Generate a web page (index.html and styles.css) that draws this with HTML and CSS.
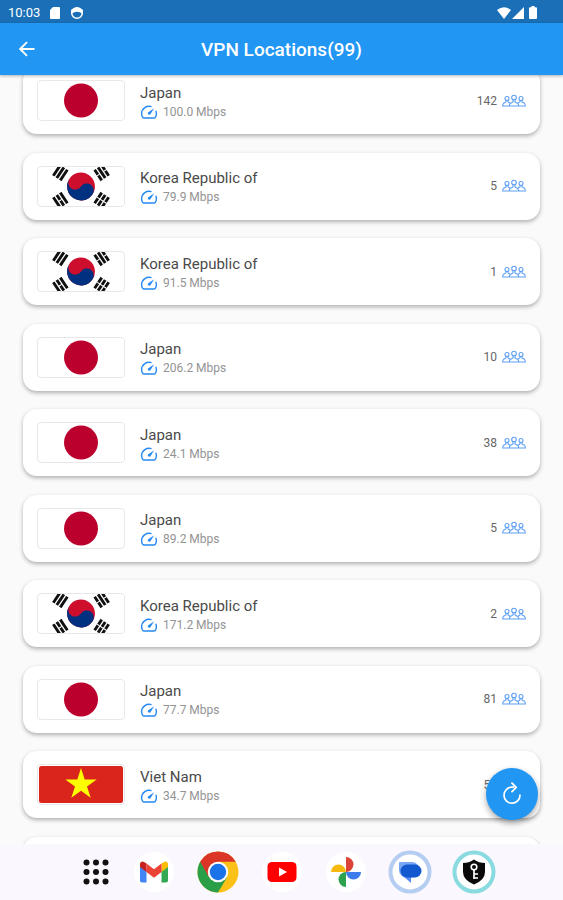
FILE: index.html
```html
<!DOCTYPE html>
<html lang="en">
<head>
    <meta charset="UTF-8">
    <meta name="viewport" content="width=device-width, initial-scale=1.0">
    <title>VPN Locations</title>
    <link rel="stylesheet" href="styles.css">
</head>
<body>
    <!-- shared drawings -->
    <svg class="sprite" aria-hidden="true">
        <symbol id="flag-jp" viewBox="0 0 86 39">
            <circle cx="43" cy="19.5" r="17" fill="#bc002d"/>
        </symbol>
        <symbol id="flag-kr" viewBox="-37 -16.8 74 33.6">
            <g transform="rotate(-56.31)">
                <path d="M-5.500-25H5.500M-5.500-21.400H5.500M-5.500-17.800H5.500M-5.500 17.800H5.500M-5.500 21.400H5.500M-5.500 25H5.500" stroke="#111" stroke-width="2.500"/>
                <path d="M0 16.500v10" stroke="#fff"/>
                <circle r="12" fill="#cd0f2d"/>
                <path d="M0-12A6 6 0 0 0 0 0A6 6 0 0 1 0 12A12 12 0 0 1 0-12Z" fill="#003080"/>
            </g>
            <g transform="rotate(-123.69)">
                <path d="M-5.500-25H5.500M-5.500-21.400H5.500M-5.500-17.800H5.500M-5.500 17.800H5.500M-5.500 21.400H5.500M-5.500 25H5.500" stroke="#111" stroke-width="2.500"/>
                <path d="M0-22.800v2.800M0 16.500v2.700M0 23.500v3" stroke="#fff"/>
            </g>
        </symbol>
        <symbol id="flag-vn" viewBox="0 0 86 39">
            <rect x="1" y="1" width="84" height="37" rx="2.500" fill="#da251d"/>
            <path d="M43 3l3.700 11.400h12l-9.700 7 3.700 11.400-9.700-7-9.700 7 3.700-11.400-9.700-7h12z" fill="#ff0"/>
        </symbol>
        <symbol id="speed" viewBox="0 0 18 16">
            <path d="M11.500 2.700A7.500 7.500 0 0 0 1.600 9.500Q1.600 11.800 2.700 13.300Q3.200 14 4 14H14Q14.800 14 15.300 13.300Q16.400 11.800 16.400 9.500Q16.400 8 15.800 6.700" fill="none" stroke="#2589f2" stroke-width="1.400" stroke-linejoin="round"/>
            <path d="M14.200 4.300L10.200 10.400A1.500 1.500 0 0 1 8 8.400Z" fill="#2589f2"/>
        </symbol>
        <symbol id="people" viewBox="0 0 24 14">
            <g fill="none" stroke="#5f9ff5" stroke-width="1.100">
                <circle cx="5" cy="4.500" r="2"/>
                <circle cx="12" cy="3.500" r="2.300"/>
                <circle cx="19" cy="4.500" r="2"/>
                <path d="M4 6.500V8L1.500 9.300Q.7 10 .7 12H23.300Q23.300 10 22.500 9.300L20 8V6.500M6 6.500V8L8 9M11 6v2L8.300 9.500Q7.300 10.300 7.300 12M16.700 12Q16.700 10.300 15.700 9.500L13 8V6M18 6.500V8L16 9"/>
            </g>
        </symbol>
    </svg>

    <div class="app">
        <div class="status-bar">
            <span>10:03</span>
            <svg width="12" height="14" viewBox="0 0 12 14"><path d="M4 1h6a1 1 0 0 1 1 1v10a1 1 0 0 1-1 1H2a1 1 0 0 1-1-1V4z" fill="#fff"/></svg>
            <svg width="14" height="14" viewBox="0 0 14 14">
                <circle cx="7" cy="7" r="5.300" fill="none" stroke="#fff" stroke-width="1.500"/>
                <path d="M.8 4Q7-1 13.200 4L12 7.500Q10 5.800 7 5.800T2 7.500z" fill="#fff"/>
            </svg>
            <div class="signals">
                <svg width="14" height="12" viewBox="0 0 14 12"><path d="M0 3Q7-2.500 14 3L7 12z" fill="#fff"/></svg>
                <svg width="12" height="12" viewBox="0 0 12 12"><path d="M12 0v12H0z" fill="#fff"/></svg>
                <svg class="battery" width="8" height="13" viewBox="0 0 8 13"><path d="M2.500 0h3v1.300H7a1 1 0 0 1 1 1V12a1 1 0 0 1-1 1H1a1 1 0 0 1-1-1V2.300a1 1 0 0 1 1-1h1.500z" fill="#fff"/></svg>
            </div>
        </div>

        <header class="app-bar">
            <button class="back-btn" type="button" aria-label="Back">
                <svg width="16" height="16" viewBox="0 0 16 16"><path d="M15.500 8H1.500M8 1.200L1.200 8 8 14.800" fill="none" stroke="#fff" stroke-width="1.900"/></svg>
            </button>
            <h1>VPN Locations(99)</h1>
        </header>

        <main class="locations">
            <ul class="list">
                <li class="card">
                    <svg class="flag"><use href="#flag-jp"/></svg>
                    <div class="info">
                        <h2>Japan</h2>
                        <p><svg class="speed"><use href="#speed"/></svg>100.0 Mbps</p>
                    </div>
                    <span class="users">142<svg class="people"><use href="#people"/></svg></span>
                </li>
                <li class="card">
                    <svg class="flag"><use href="#flag-kr"/></svg>
                    <div class="info">
                        <h2>Korea Republic of</h2>
                        <p><svg class="speed"><use href="#speed"/></svg>79.9 Mbps</p>
                    </div>
                    <span class="users">5<svg class="people"><use href="#people"/></svg></span>
                </li>
                <li class="card">
                    <svg class="flag"><use href="#flag-kr"/></svg>
                    <div class="info">
                        <h2>Korea Republic of</h2>
                        <p><svg class="speed"><use href="#speed"/></svg>91.5 Mbps</p>
                    </div>
                    <span class="users">1<svg class="people"><use href="#people"/></svg></span>
                </li>
                <li class="card">
                    <svg class="flag"><use href="#flag-jp"/></svg>
                    <div class="info">
                        <h2>Japan</h2>
                        <p><svg class="speed"><use href="#speed"/></svg>206.2 Mbps</p>
                    </div>
                    <span class="users">10<svg class="people"><use href="#people"/></svg></span>
                </li>
                <li class="card">
                    <svg class="flag"><use href="#flag-jp"/></svg>
                    <div class="info">
                        <h2>Japan</h2>
                        <p><svg class="speed"><use href="#speed"/></svg>24.1 Mbps</p>
                    </div>
                    <span class="users">38<svg class="people"><use href="#people"/></svg></span>
                </li>
                <li class="card">
                    <svg class="flag"><use href="#flag-jp"/></svg>
                    <div class="info">
                        <h2>Japan</h2>
                        <p><svg class="speed"><use href="#speed"/></svg>89.2 Mbps</p>
                    </div>
                    <span class="users">5<svg class="people"><use href="#people"/></svg></span>
                </li>
                <li class="card">
                    <svg class="flag"><use href="#flag-kr"/></svg>
                    <div class="info">
                        <h2>Korea Republic of</h2>
                        <p><svg class="speed"><use href="#speed"/></svg>171.2 Mbps</p>
                    </div>
                    <span class="users">2<svg class="people"><use href="#people"/></svg></span>
                </li>
                <li class="card">
                    <svg class="flag"><use href="#flag-jp"/></svg>
                    <div class="info">
                        <h2>Japan</h2>
                        <p><svg class="speed"><use href="#speed"/></svg>77.7 Mbps</p>
                    </div>
                    <span class="users">81<svg class="people"><use href="#people"/></svg></span>
                </li>
                <li class="card">
                    <svg class="flag"><use href="#flag-vn"/></svg>
                    <div class="info">
                        <h2>Viet Nam</h2>
                        <p><svg class="speed"><use href="#speed"/></svg>34.7 Mbps</p>
                    </div>
                    <span class="users">52<svg class="people"><use href="#people"/></svg></span>
                </li>
                <li class="card"></li>
            </ul>
            <button class="refresh-btn" type="button" aria-label="Refresh">
                <svg width="22" height="24" viewBox="0 0 22 24">
                    <path d="M12.500 5.200H11A8 8 0 1 0 19 13.200" fill="none" stroke="#fff" stroke-width="1.700" stroke-linecap="round"/>
                    <path d="M11 1.200L15.200 5.400L11 9.600" fill="none" stroke="#fff" stroke-width="1.900" stroke-linecap="round" stroke-linejoin="round"/>
                </svg>
            </button>
        </main>

        <nav class="dock">
            <button class="apps" type="button" aria-label="All apps">
                <svg width="26" height="26" viewBox="0 0 26 26" fill="#111">
                    <circle cx="3.500" cy="3.500" r="3"/><circle cx="13" cy="3.500" r="3"/><circle cx="22.500" cy="3.500" r="3"/>
                    <circle cx="3.500" cy="13" r="3"/><circle cx="13" cy="13" r="3"/><circle cx="22.500" cy="13" r="3"/>
                    <circle cx="3.500" cy="22.500" r="3"/><circle cx="13" cy="22.500" r="3"/><circle cx="22.500" cy="22.500" r="3"/>
                </svg>
            </button>
            <button type="button" aria-label="Gmail">
                <svg viewBox="0 0 44 44">
                    <circle cx="22" cy="22" r="20" fill="#fff"/>
                    <path d="M8 14v16.500a2 2 0 0 0 2 2h4.500V19z" fill="#4285f4"/>
                    <path d="M36 14v16.500a2 2 0 0 1-2 2h-4.500V19z" fill="#34a853"/>
                    <path d="M29.500 13.500L32 12c2-1.300 4 0 4 2.500V17l-6.500 5z" fill="#fbbc04"/>
                    <path d="M8 14.500c0-2.500 2-3.800 4-2.500l2.500 1.500V22L8 17z" fill="#c5221f"/>
                    <path d="M14.500 13.500L22 19.300l7.500-5.800V22L22 27.700 14.500 22z" fill="#ea4335"/>
                </svg>
            </button>
            <button type="button" aria-label="Chrome">
                <svg viewBox="0 0 44 44">
                    <circle cx="22" cy="22" r="20.500" fill="#fbc116"/>
                    <path d="M22 22L4.200 11.800A20.500 20.500 0 0 0 22 42.500L31.100 27.200z" fill="#2a9f48"/>
                    <path d="M4.200 11.800A20.500 20.500 0 0 1 39.800 11.800H22L12.900 27.200z" fill="#db3527"/>
                    <circle cx="22" cy="22" r="10.300" fill="#fff"/>
                    <circle cx="22" cy="22" r="8.200" fill="#1a73e8"/>
                </svg>
            </button>
            <button type="button" aria-label="YouTube">
                <svg viewBox="0 0 44 44">
                    <circle cx="22" cy="22" r="20" fill="#fff"/>
                    <rect x="7.500" y="12" width="29" height="20" rx="4.500" fill="#f00"/>
                    <path d="M19 17.500v9l8-4.500z" fill="#fff"/>
                </svg>
            </button>
            <button type="button" aria-label="Photos">
                <svg viewBox="0 0 44 44">
                    <circle cx="22" cy="22" r="20" fill="#fff"/>
                    <path d="M22 7a7.500 7.500 0 0 1 0 15z" fill="#db4437"/>
                    <path d="M37 22a7.500 7.500 0 0 1-15 0z" fill="#3b7ded"/>
                    <path d="M22 37a7.500 7.500 0 0 1 0-15z" fill="#2da14d"/>
                    <path d="M7 22a7.500 7.500 0 0 1 15 0z" fill="#f8b90d"/>
                </svg>
            </button>
            <button type="button" aria-label="Messages">
                <svg viewBox="0 0 44 44">
                    <circle cx="22" cy="22" r="19.500" fill="#fff" stroke="#b6cdf2" stroke-width="4"/>
                    <path d="M12 12H24a7.500 7.500 0 0 1 7.500 7.500V20a7.500 7.500 0 0 1-7.500 7.500H18A7.500 7.500 0 0 1 11 20V13Q11 12 12 12z" fill="#79a5f5"/>
                    <path d="M16 27h7v6z" fill="#5a8df0"/>
                    <rect x="12.500" y="14.500" width="21" height="13" rx="6.500" fill="#1259cf"/>
                </svg>
            </button>
            <button type="button" aria-label="VPN">
                <svg viewBox="0 0 44 44">
                    <circle cx="22" cy="22" r="19.500" fill="#fff" stroke="#8adbe0" stroke-width="4"/>
                    <path d="M22 9.500q5 3.500 11 3.500v9q0 8-11 12.500Q11 30 11 22v-9q6 0 11-3.500z" fill="#0a0a0a"/>
                    <circle cx="22" cy="17" r="2.800" fill="none" stroke="#fff" stroke-width="1.600"/>
                    <path d="M22 20v9M22 24h4M22 28h4" stroke="#fff" stroke-width="1.700"/>
                </svg>
            </button>
        </nav>
    </div>
</body>
</html>
```
FILE: styles.css
```css
* {
    margin: 0;
    padding: 0;
    box-sizing: border-box;
    font-family: Roboto, "Liberation Sans", sans-serif;
}

body {
    background: #fafafa;
    color: #4a4a4a;
}

svg {
    display: block;
    flex-shrink: 0;
}

button {
    border: none;
    background: none;
    cursor: pointer;
}

.sprite {
    position: absolute;
    width: 0;
    height: 0;
}

.app {
    height: 100vh;
    display: flex;
    flex-direction: column;
}

.status-bar {
    height: 23px;
    padding: 2px 26px 0 8px;
    display: flex;
    align-items: center;
    gap: 9px;
    background: #1a6fb6;
    color: #fff;
    font-size: 13px;
}

.signals {
    margin-left: auto;
    display: flex;
    align-items: center;
    gap: 1px;
}

.battery {
    margin-left: 4px;
}

.app-bar {
    position: relative;
    z-index: 1;
    height: 52px;
    padding: 0 19px;
    display: grid;
    grid-template-columns: 16px 1fr 16px;
    align-items: center;
    background: #2196f3;
    box-shadow: 0 1px 3px rgba(0,0,0,0.3);
}

.app-bar h1 {
    color: #fff;
    font-size: 19px;
    font-weight: 500;
    text-align: center;
}

.locations {
    position: relative;
    flex: 1;
    min-height: 0;
    padding: 0 23px;
    display: flex;
    flex-direction: column;
    overflow: hidden;
}

/* the list is scrolled a little, so both ends run past the edges */
.list {
    flex: 1;
    margin: -8px 0 -60px;
    display: flex;
    flex-direction: column;
    justify-content: space-between;
    gap: 18px;
    list-style: none;
}

.card {
    height: 67px;
    flex-shrink: 0;
    padding: 0 14px;
    display: flex;
    align-items: center;
    background: #fff;
    border-radius: 14px;
    box-shadow: 0 2px 4px rgba(0,0,0,0.3);
}

.flag {
    width: 88px;
    height: 41px;
    border: 1px solid #e8e8e8;
    border-radius: 4px;
}

.info {
    flex: 1;
    margin-left: 15px;
    padding-top: 2px;
}

.info h2 {
    font-size: 15px;
    line-height: 20px;
    font-weight: 400;
}

.info p {
    display: flex;
    align-items: center;
    gap: 5px;
    color: #939393;
    font-size: 12px;
    line-height: 18px;
}

.speed {
    width: 18px;
    height: 16px;
}

.users {
    display: flex;
    align-items: center;
    gap: 5px;
    color: #666;
    font-size: 12px;
}

.people {
    width: 24px;
    height: 14px;
}

.refresh-btn {
    position: absolute;
    right: 25px;
    bottom: 24px;
    width: 52px;
    height: 52px;
    display: flex;
    align-items: center;
    justify-content: center;
    border-radius: 50%;
    background: #2196f3;
    box-shadow: 0 3px 6px rgba(0,0,0,0.35);
}

.dock {
    height: 56px;
    padding-left: 12px;
    display: flex;
    align-items: center;
    justify-content: center;
    gap: 20px;
    background: #faf7ff;
}

.dock button {
    width: 44px;
    height: 44px;
}

.dock .apps {
    width: 32px;
    display: flex;
    align-items: center;
    justify-content: center;
}
```
